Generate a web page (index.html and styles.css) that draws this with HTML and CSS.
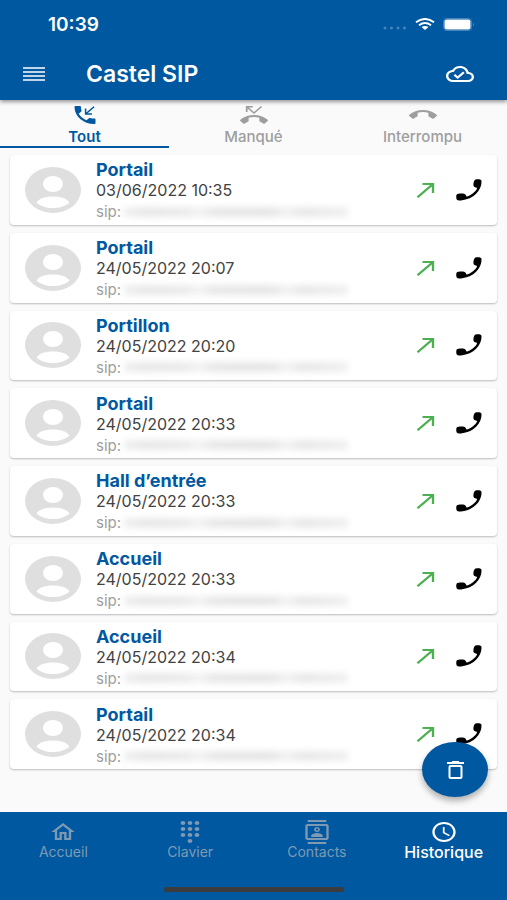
FILE: index.html
```html
<!DOCTYPE html>
<html lang="fr">
<head>
    <meta charset="UTF-8">
    <meta name="viewport" content="width=device-width, initial-scale=1.0">
    <title>Castel SIP</title>
    <link rel="stylesheet" href="styles.css">
</head>
<body>
<svg class="sprite" aria-hidden="true">
    <symbol id="avatar" viewBox="0 0 56 46" preserveAspectRatio="none">
        <ellipse cx="28" cy="23" rx="28" ry="23" fill="#dfdfdf"/>
        <ellipse cx="28" cy="17" rx="10" ry="8" fill="#fff"/>
        <path d="M11.500 35.500C14 31 22 29.500 28 29.500S42 31 44.500 35.500C41 39 35 41 28 41S15 39 11.500 35.500z" fill="#fff"/>
    </symbol>
    <symbol id="outgoing" viewBox="0 0 24 24" preserveAspectRatio="none">
        <path d="M9 5v2h6.590L4 18.590 5.410 20 17 8.410V15h2V5z"/>
    </symbol>
    <symbol id="phone" viewBox="0 0 26 22" preserveAspectRatio="none">
        <path d="M19.500 .5C22 -.1 24.800 .2 25.400 1.500C26.500 9.500 19 20.500 5 21.400C3 21.500 1 21.300 .6 20.200C.1 18.500 .1 17 .7 15.600C2 14.300 6.500 14.200 8.700 14.900C10.300 15.600 9.800 17.400 11 17.400C15 16.200 19.800 12.600 21 9.400C21.200 8.300 18.600 8.900 17.700 7.300C17 5.500 17.600 1.600 19.500 .5z"/>
    </symbol>
</svg>

<div class="app">
    <header class="header">
        <div class="status">
            <span class="time">10:39</span>
            <svg class="signal" viewBox="0 0 24 4"><circle cx="2" cy="2" r="1.500"/><circle cx="8.500" cy="2" r="1.500"/><circle cx="15" cy="2" r="1.500"/><circle cx="21.500" cy="2" r="1.500"/></svg>
            <svg class="wifi" viewBox="0 0 20 12" preserveAspectRatio="none">
                <path d="M1 4.200Q10-2.200 19 4.200M4 7.200Q10 2.800 16 7.200" fill="none" stroke="#fff" stroke-width="2"/>
                <path d="M6.500 9Q10 6.800 13.500 9L10 12z" fill="#fff"/>
            </svg>
            <svg class="battery" viewBox="0 0 32 13">
                <rect x=".5" y=".5" width="28" height="12" rx="3" fill="none" stroke="#4585bd"/>
                <rect x="1.500" y="1.500" width="26" height="10" rx="2" fill="#fff"/>
                <path d="M30 4.500q2 2 0 4z" fill="#4585bd"/>
            </svg>
        </div>
        <div class="toolbar">
            <button class="icon-button" aria-label="Menu">
                <svg class="menu-icon" viewBox="0 0 22 14"><path d="M0 1h22M0 5h22M0 9h22M0 13h22" stroke="#fff" stroke-width="1.600"/></svg>
            </button>
            <h1 class="title">Castel SIP</h1>
            <button class="icon-button" aria-label="Connexion">
                <svg class="icon" viewBox="0 0 24 24" preserveAspectRatio="none"><path d="M19.350 10.040C18.670 6.590 15.640 4 12 4 9.110 4 6.600 5.640 5.350 8.040 2.340 8.360 0 10.910 0 14c0 3.310 2.690 6 6 6h13c2.760 0 5-2.240 5-5 0-2.640-2.050-4.780-4.650-4.960zM19 18H6c-2.210 0-4-1.790-4-4 0-2.050 1.530-3.760 3.560-3.970l1.070-.11.5-.95C8.080 7.140 9.940 6 12 6c2.620 0 4.880 1.860 5.390 4.430l.3 1.500 1.530.11c1.560.1 2.780 1.410 2.780 2.960 0 1.650-1.350 3-3 3zm-9-3.820l-2.090-2.090L6.500 13.500 10 17l6.010-6.010-1.410-1.410z"/></svg>
            </button>
        </div>
    </header>

    <nav class="tabs">
        <button class="tab active">
            <svg class="icon" viewBox="0 0 24 24" preserveAspectRatio="none"><path d="M20 15.500c-1.250 0-2.450-.2-3.570-.57-.35-.11-.74-.03-1.020.24l-2.200 2.200c-2.830-1.440-5.150-3.750-6.590-6.590l2.200-2.210c.28-.26.36-.65.25-1C8.700 6.450 8.500 5.250 8.500 4c0-.55-.45-1-1-1H4c-.55 0-1 .45-1 1 0 9.390 7.610 17 17 17 .55 0 1-.45 1-1v-3.500c0-.55-.45-1-1-1z"/><path d="M19.800 3.800L12.800 10.800M12.500 5.500V11H18" fill="none" stroke="currentColor" stroke-width="1.300"/></svg>
            Tout
        </button>
        <button class="tab">
            <svg class="icon" viewBox="0 0 24 24" preserveAspectRatio="none"><path d="M23.710 16.670C20.660 13.780 16.540 12 12 12 7.460 12 3.340 13.780.29 16.670c-.18.18-.29.43-.29.71s.11.53.29.71l2.480 2.480c.18.18.43.29.71.29.27 0 .52-.11.7-.28.79-.74 1.690-1.360 2.660-1.850.33-.16.56-.5.56-.9v-3.100c1.450-.48 3-.73 4.600-.73 1.600 0 3.150.25 4.600.72v3.100c0 .39.23.74.56.9.98.49 1.870 1.120 2.670 1.850.18.18.43.28.7.28.28 0 .53-.11.71-.29l2.480-2.480c.18-.18.29-.43.29-.71s-.12-.52-.3-.7zM6.500 5.500L12 11l7-7-1-1-6 6-4.500-4.500H11V3H5v6h1.500V5.500z"/></svg>
            Manqué
        </button>
        <button class="tab">
            <svg class="icon" viewBox="0 0 24 24" preserveAspectRatio="none"><path d="M12 9c-1.600 0-3.150.25-4.600.72v3.100c0 .39-.23.74-.56.9-.98.49-1.870 1.120-2.660 1.850-.18.18-.43.28-.7.28-.28 0-.53-.11-.71-.29L.29 13.080c-.18-.17-.29-.42-.29-.7 0-.28.11-.53.29-.71C3.340 8.780 7.460 7 12 7s8.660 1.780 11.710 4.670c.18.18.29.43.29.71 0 .28-.11.53-.29.71l-2.480 2.480c-.18.18-.43.29-.71.29-.27 0-.52-.11-.7-.28-.79-.74-1.690-1.360-2.670-1.850-.33-.16-.56-.5-.56-.9v-3.100C15.150 9.250 13.600 9 12 9z"/></svg>
            Interrompu
        </button>
    </nav>

    <main class="calls">
        <article class="call">
            <svg class="avatar"><use href="#avatar"/></svg>
            <div class="info">
                <h2 class="name">Portail</h2>
                <p class="date">03/06/2022 10:35</p>
                <p class="address">sip:<span class="hidden-address"></span></p>
            </div>
            <svg class="icon outgoing"><use href="#outgoing"/></svg>
            <button class="icon-button" aria-label="Appeler"><svg class="phone"><use href="#phone"/></svg></button>
        </article>
        <article class="call">
            <svg class="avatar"><use href="#avatar"/></svg>
            <div class="info">
                <h2 class="name">Portail</h2>
                <p class="date">24/05/2022 20:07</p>
                <p class="address">sip:<span class="hidden-address"></span></p>
            </div>
            <svg class="icon outgoing"><use href="#outgoing"/></svg>
            <button class="icon-button" aria-label="Appeler"><svg class="phone"><use href="#phone"/></svg></button>
        </article>
        <article class="call">
            <svg class="avatar"><use href="#avatar"/></svg>
            <div class="info">
                <h2 class="name">Portillon</h2>
                <p class="date">24/05/2022 20:20</p>
                <p class="address">sip:<span class="hidden-address"></span></p>
            </div>
            <svg class="icon outgoing"><use href="#outgoing"/></svg>
            <button class="icon-button" aria-label="Appeler"><svg class="phone"><use href="#phone"/></svg></button>
        </article>
        <article class="call">
            <svg class="avatar"><use href="#avatar"/></svg>
            <div class="info">
                <h2 class="name">Portail</h2>
                <p class="date">24/05/2022 20:33</p>
                <p class="address">sip:<span class="hidden-address"></span></p>
            </div>
            <svg class="icon outgoing"><use href="#outgoing"/></svg>
            <button class="icon-button" aria-label="Appeler"><svg class="phone"><use href="#phone"/></svg></button>
        </article>
        <article class="call">
            <svg class="avatar"><use href="#avatar"/></svg>
            <div class="info">
                <h2 class="name">Hall d’entrée</h2>
                <p class="date">24/05/2022 20:33</p>
                <p class="address">sip:<span class="hidden-address"></span></p>
            </div>
            <svg class="icon outgoing"><use href="#outgoing"/></svg>
            <button class="icon-button" aria-label="Appeler"><svg class="phone"><use href="#phone"/></svg></button>
        </article>
        <article class="call">
            <svg class="avatar"><use href="#avatar"/></svg>
            <div class="info">
                <h2 class="name">Accueil</h2>
                <p class="date">24/05/2022 20:33</p>
                <p class="address">sip:<span class="hidden-address"></span></p>
            </div>
            <svg class="icon outgoing"><use href="#outgoing"/></svg>
            <button class="icon-button" aria-label="Appeler"><svg class="phone"><use href="#phone"/></svg></button>
        </article>
        <article class="call">
            <svg class="avatar"><use href="#avatar"/></svg>
            <div class="info">
                <h2 class="name">Accueil</h2>
                <p class="date">24/05/2022 20:34</p>
                <p class="address">sip:<span class="hidden-address"></span></p>
            </div>
            <svg class="icon outgoing"><use href="#outgoing"/></svg>
            <button class="icon-button" aria-label="Appeler"><svg class="phone"><use href="#phone"/></svg></button>
        </article>
        <article class="call">
            <svg class="avatar"><use href="#avatar"/></svg>
            <div class="info">
                <h2 class="name">Portail</h2>
                <p class="date">24/05/2022 20:34</p>
                <p class="address">sip:<span class="hidden-address"></span></p>
            </div>
            <svg class="icon outgoing"><use href="#outgoing"/></svg>
            <button class="icon-button" aria-label="Appeler"><svg class="phone"><use href="#phone"/></svg></button>
        </article>

        <button class="delete" aria-label="Supprimer">
            <svg class="delete-icon" viewBox="0 0 17 18"><path d="M0 2h17M5 1h7" stroke="#fff" stroke-width="2"/><rect x="2.500" y="5" width="12" height="12" rx="1" fill="none" stroke="#fff" stroke-width="2"/></svg>
        </button>
    </main>

    <nav class="bottom">
        <a class="link" href="#">
            <svg class="icon" viewBox="0 0 24 24" preserveAspectRatio="none"><path d="M12 5.690l5 4.500V18h-2v-6H9v6H7v-7.810l5-4.500M12 3L2 12h3v8h6v-6h2v6h6v-8h3L12 3z"/></svg>
            Accueil
        </a>
        <a class="link" href="#">
            <svg class="icon" viewBox="0 0 24 24" preserveAspectRatio="none"><path d="M12 19c-1.100 0-2 .9-2 2s.9 2 2 2 2-.9 2-2-.9-2-2-2zM6 1c-1.100 0-2 .9-2 2s.9 2 2 2 2-.9 2-2-.9-2-2-2zm0 6c-1.100 0-2 .9-2 2s.9 2 2 2 2-.9 2-2-.9-2-2-2zm0 6c-1.100 0-2 .9-2 2s.9 2 2 2 2-.9 2-2-.9-2-2-2zm12-8c1.100 0 2-.9 2-2s-.9-2-2-2-2 .9-2 2 .9 2 2 2zm-6 8c-1.100 0-2 .9-2 2s.9 2 2 2 2-.9 2-2-.9-2-2-2zm6 0c-1.100 0-2 .9-2 2s.9 2 2 2 2-.9 2-2-.9-2-2-2zm0-6c-1.100 0-2 .9-2 2s.9 2 2 2 2-.9 2-2-.9-2-2-2zm-6 0c-1.100 0-2 .9-2 2s.9 2 2 2 2-.9 2-2-.9-2-2-2zm0-6c-1.100 0-2 .9-2 2s.9 2 2 2 2-.9 2-2-.9-2-2-2z"/></svg>
            Clavier
        </a>
        <a class="link" href="#">
            <svg class="icon" viewBox="0 0 24 24" preserveAspectRatio="none"><path d="M20 4H4c-1.100 0-2 .9-2 2v12c0 1.100.9 2 2 2h16c1.100 0 2-.9 2-2V6c0-1.100-.9-2-2-2zm0 14H4V6h16v12zM4 0h16v2H4zm0 22h16v2H4zm8-10c1.380 0 2.500-1.120 2.500-2.500S13.380 7 12 7 9.500 8.120 9.500 9.500 10.620 12 12 12zm0-3.500c.55 0 1 .45 1 1s-.45 1-1 1-1-.45-1-1 .45-1 1-1zm5 7.490C17 13.900 13.690 13 12 13s-5 .9-5 2.990V17h10v-1.010z"/></svg>
            Contacts
        </a>
        <a class="link current" href="#">
            <svg class="icon" viewBox="0 0 24 24" preserveAspectRatio="none"><path d="M11.990 2C6.470 2 2 6.480 2 12s4.470 10 9.990 10C17.520 22 22 17.520 22 12S17.520 2 11.990 2zM12 20c-4.420 0-8-3.580-8-8s3.580-8 8-8 8 3.580 8 8-3.580 8-8 8zm.5-13H11v6l5.250 3.150.75-1.230-4.500-2.670z"/></svg>
            Historique
        </a>
        <span class="home-bar"></span>
    </nav>
</div>
</body>
</html>
```
FILE: styles.css
```css
*
{
    box-sizing:border-box;
}
body
{
    margin:0;
    background-color:#fafafa;
    font-family:Inter, "Liberation Sans", sans-serif;
}
button
{
    padding:0;
    border:none;
    background-color:transparent;
    font-family:inherit;
    cursor:pointer;
}
svg
{
    display:block;
    flex:none;
}
.sprite
{
    display:none;
}
.app
{
    display:flex;
    flex-direction:column;
    min-height:100vh;
}
.icon
{
    width:28px;
    height:24px;
    fill:currentColor;
}
.icon-button
{
    display:flex;
    align-items:center;
    justify-content:center;
    color:inherit;
}

/* header */
.header
{
    position:relative;
    background-color:#0058a1;
    color:white;
    box-shadow:0 2px 4px rgba(0, 0, 0, 0.4);
}
.status
{
    display:flex;
    align-items:center;
    height:48px;
    padding:0 32px 0 48px;
}
.time
{
    flex:1;
    font-size:19px;
    font-weight:600;
}
.signal
{
    width:24px;
    height:4px;
    margin-top:8px;
    fill:#4585bd;
}
.wifi
{
    width:20px;
    height:12px;
    margin:0 8px;
}
.battery
{
    width:32px;
    height:13px;
}
.toolbar
{
    display:flex;
    align-items:center;
    height:52px;
    padding:0 33px 0 23px;
}
.menu-icon
{
    width:22px;
    height:14px;
}
.title
{
    flex:1;
    margin:0 0 0 41px;
    font-size:23px;
    font-weight:600;
}

/* tabs */
.tabs
{
    display:flex;
}
.tab
{
    display:flex;
    flex:1;
    flex-direction:column;
    align-items:center;
    height:48px;
    padding-top:3px;
    border-bottom:2px solid transparent;
    color:#9e9e9e;
    font-size:15px;
    font-weight:500;
    line-height:20px;
}
.active
{
    border-color:#0058a1;
    color:#0058a1;
    font-weight:600;
}

/* call list */
.calls
{
    position:relative;
    display:grid;
    flex:1;
    grid-auto-rows:1fr;
    gap:8px;
    padding:7px 10px 43px;
}
.call
{
    display:flex;
    align-items:center;
    padding:0 15px;
    border-radius:4px;
    background-color:white;
    box-shadow:0 1px 2px rgba(0, 0, 0, 0.25);
}
.avatar
{
    width:56px;
    height:46px;
}
.info
{
    flex:1;
    margin-left:15px;
    padding-top:2px;
}
.name,.date,.address
{
    margin:0;
    line-height:21px;
}
.name
{
    color:#0058a1;
    font-size:18px;
    font-weight:700;
}
.date
{
    color:#424242;
    font-size:16px;
}
.address
{
    display:flex;
    align-items:center;
    color:#9e9e9e;
    font-size:15px;
}
.hidden-address
{
    width:224px;
    height:10px;
    margin-left:3px;
    background-image:linear-gradient(90deg, #f0f0f0, #e8e8e8 10%, #ebebeb 28%, #f4f4f4 33%, #e8e8e8 40%, #e6e6e6 62%, #e9e9e9 68%, #f3f3f3 72%, #e8e8e8 80%, #f0f0f0);
    filter:blur(3px);
}
.outgoing
{
    margin-right:16px;
    color:#4caf50;
}
.phone
{
    width:26px;
    height:22px;
}
.delete
{
    position:absolute;
    right:19px;
    bottom:15px;
    display:flex;
    align-items:center;
    justify-content:center;
    width:66px;
    height:55px;
    border-radius:50%;
    background-color:#0058a1;
    box-shadow:0 4px 6px rgba(0, 0, 0, 0.3);
}
.delete-icon
{
    width:17px;
    height:18px;
}

/* bottom navigation */
.bottom
{
    position:relative;
    display:flex;
    height:88px;
    background-color:#0058a1;
}
.link
{
    display:flex;
    flex:1;
    flex-direction:column;
    align-items:center;
    padding-top:8px;
    color:#7e9ab2;
    font-size:14px;
    line-height:16px;
    text-decoration:none;
}
.current
{
    color:white;
    font-size:16px;
    font-weight:500;
}
.home-bar
{
    position:absolute;
    bottom:8px;
    left:50%;
    width:180px;
    height:5px;
    margin-left:-90px;
    border-radius:3px;
    background-color:#3c3c3c;
}
```
